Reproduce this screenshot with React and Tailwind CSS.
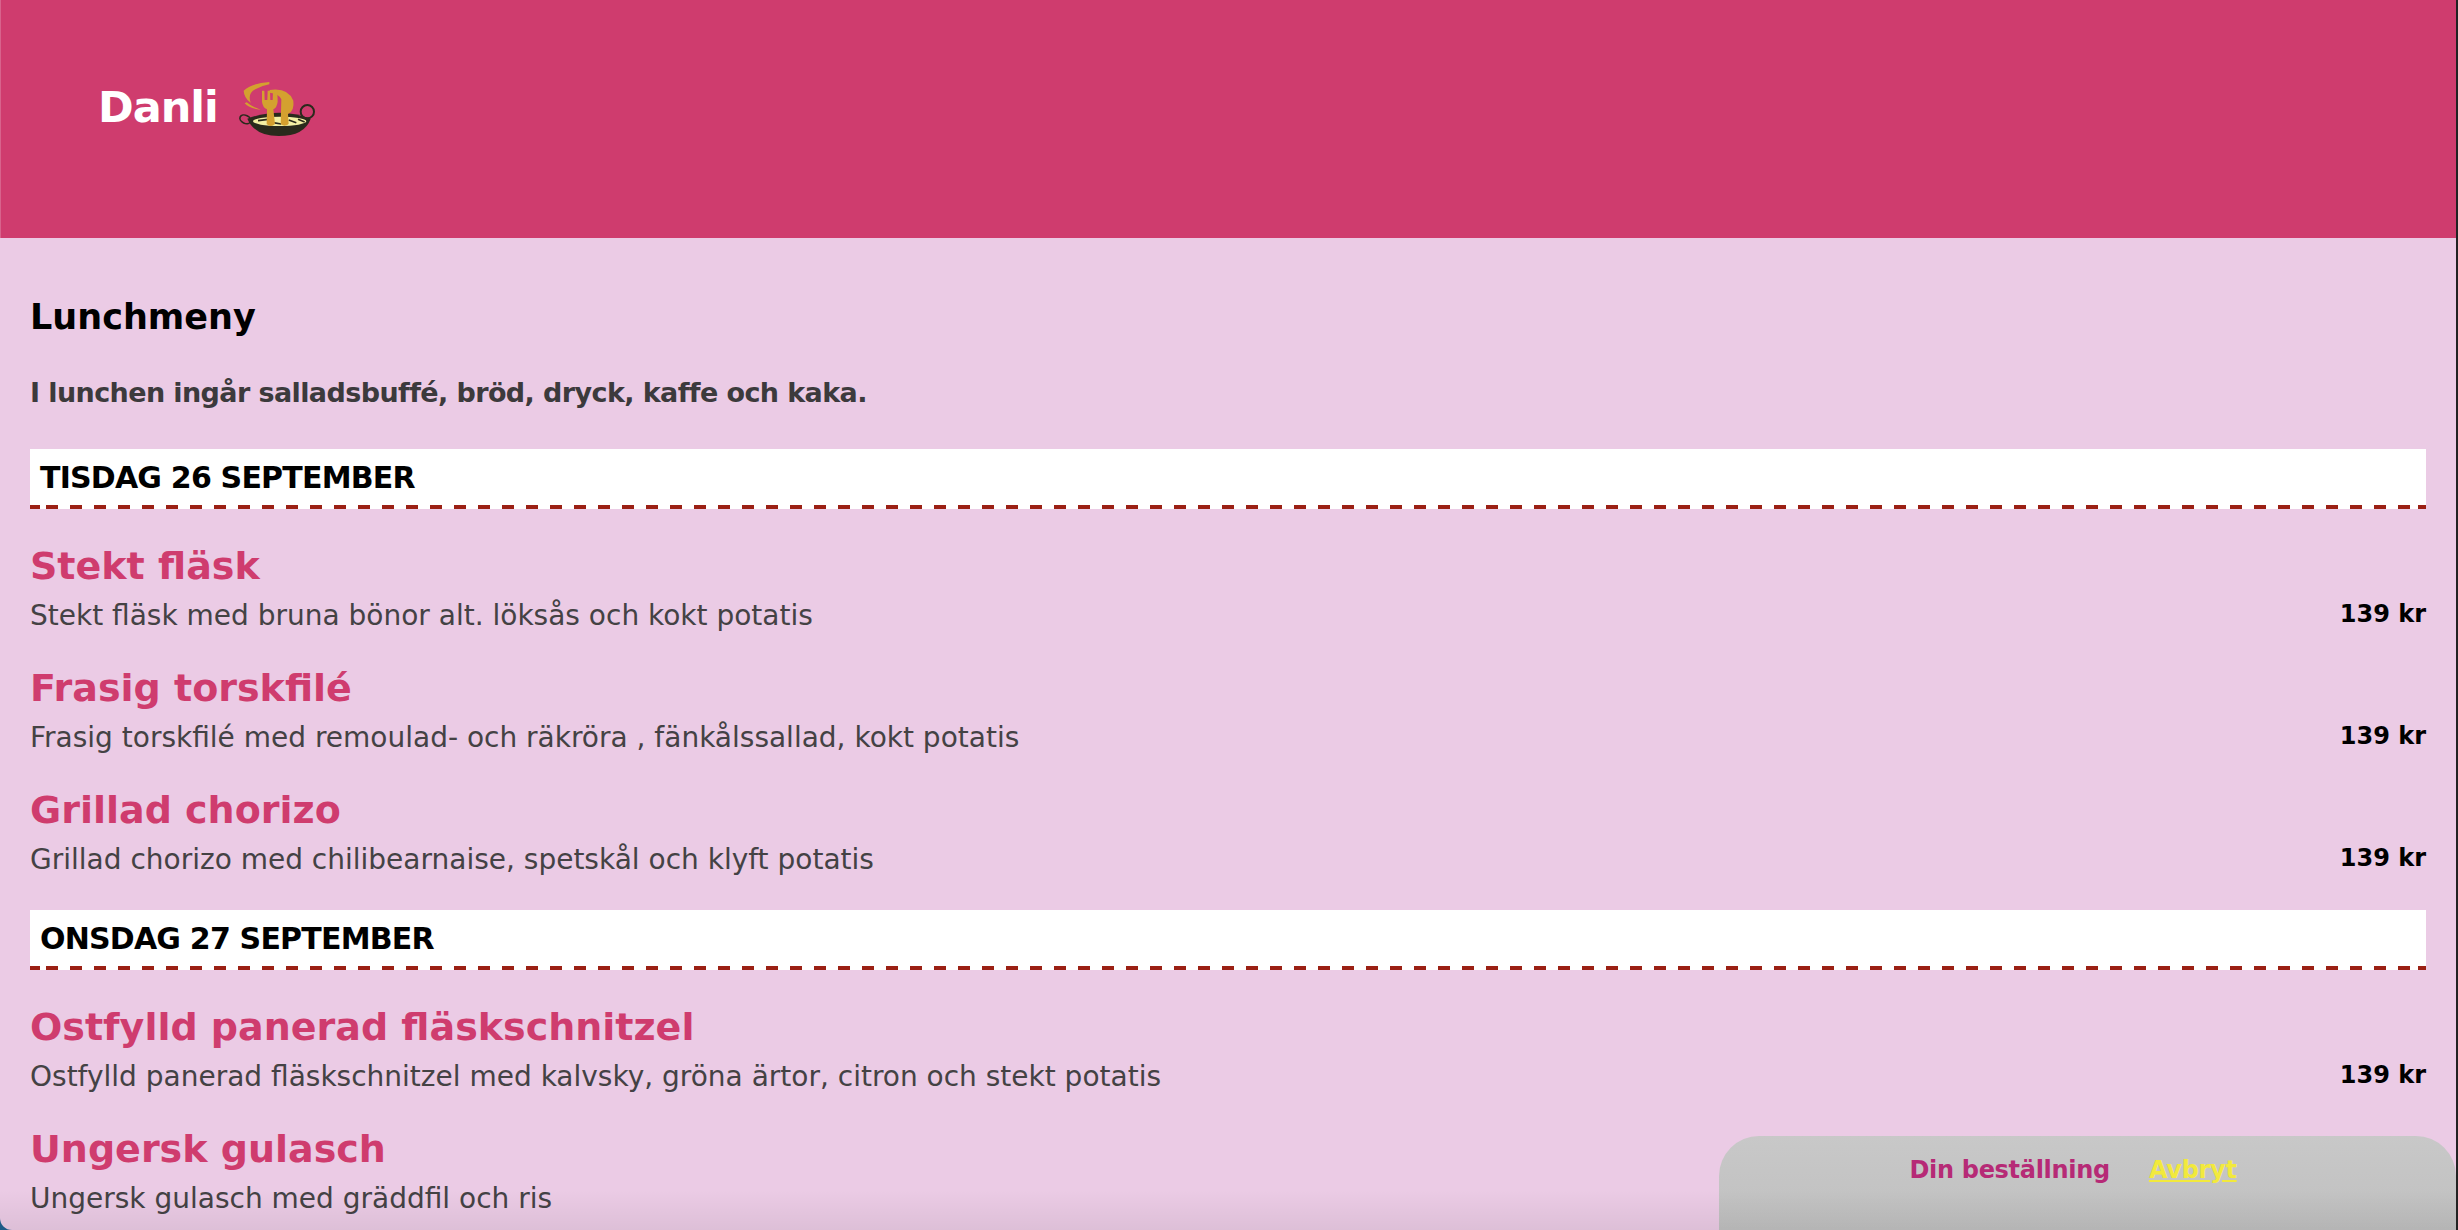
import React from 'react';

const days = [
  {
    label: 'TISDAG 26 SEPTEMBER',
    dishes: [
      { title: 'Stekt fläsk', text: 'Stekt fläsk med bruna bönor alt. löksås och kokt potatis' },
      { title: 'Frasig torskfilé', text: 'Frasig torskfilé med remoulad- och räkröra , fänkålssallad, kokt potatis' },
      { title: 'Grillad chorizo', text: 'Grillad chorizo med chilibearnaise, spetskål och klyft potatis' },
    ],
  },
  {
    label: 'ONSDAG 27 SEPTEMBER',
    dishes: [
      { title: 'Ostfylld panerad fläskschnitzel', text: 'Ostfylld panerad fläskschnitzel med kalvsky, gröna ärtor, citron och stekt potatis' },
      { title: 'Ungersk gulasch', text: 'Ungersk gulasch med gräddfil och ris' },
    ],
  },
];

function Logo() {
  return (
    <svg viewBox="110 60 234 174" className="w-[78px] h-[58px] shrink-0 ml-[20px] mt-[80px]">
      {/* handles */}
      <circle cx="318" cy="155" r="20" fill="none" stroke="#2a2a1c" strokeWidth="6" />
      <ellipse cx="132" cy="178" rx="17" ry="12" fill="none" stroke="#2a2a1c" strokeWidth="5" transform="rotate(25 132 178)" />
      {/* pan */}
      <path d="M138 176 Q235 140 328 176 Q310 228 232 228 Q160 228 138 176 Z" fill="#2a2a1c" />
      <ellipse cx="235" cy="184" rx="80" ry="14" fill="#f4f0a4" />
      <path d="M170 182 L200 178 M262 180 L285 188 M290 178 L310 186 M215 188 L240 192" stroke="#2a2a1c" strokeWidth="5" />
      {/* swirl */}
      <path d="M204 66 Q150 70 127 92 Q128 114 148 128 Q138 100 162 88 Q185 76 204 73 Z" fill="#d4a02f" />
      <path d="M130 130 Q145 146 178 149 Q150 140 136 127 Z" fill="#d4a02f" />
      {/* knife */}
      <path d="M205 90 Q260 82 276 122 Q280 152 260 162 L262 192 Q250 202 238 192 L240 118 Q232 100 205 98 Z" fill="#d4a02f" />
      {/* fork */}
      <path d="M182 92 L189 92 L190 120 L198 120 L199 92 L206 92 L207 120 L214 120 L215 92 L228 92 L229 125 Q227 142 216 148 L221 192 Q208 204 196 192 L197 148 Q184 142 182 125 Z" fill="#d4a02f" />
    </svg>
  );
}

function DashedLine() {
  return (
    <div className="flex h-1">
      <span className="w-[10px] bg-[#9b2014]" />
      <span className="w-[6px]" />
      <div className="flex-1 bg-[repeating-linear-gradient(90deg,#9b2014_0,#9b2014_12px,transparent_12px,transparent_24px)]" />
      <span className="w-[8px] bg-[#9b2014]" />
    </div>
  );
}

export default function App() {
  return (
    <div className="relative h-screen overflow-hidden bg-[#1f5f8f] font-['DejaVu_Sans',sans-serif]">
      <div className="h-full bg-[#ebcbe5] rounded-bl-[12px] overflow-hidden">
        <header className="h-[238px] bg-[#cf3c6e] pl-[97px] flex items-start border-l border-l-[#d8638c]">
          <h1 className="text-[43px] leading-[52px] tracking-[-1px] font-bold text-white mt-[81px]">Danli</h1>
          <Logo />
        </header>

        <main className="pl-[30px] pr-[32px] pt-[56px]">
          <h2 className="text-[35px] leading-[46px] font-bold text-black">Lunchmeny</h2>
          <p className="mt-[35px] pb-[6px] text-[27px] leading-[36px] tracking-[-0.6px] font-bold text-[#3c3a3c]">
            I lunchen ingår salladsbuffé, bröd, dryck, kaffe och kaka.
          </p>

          {days.map((day) => (
            <section key={day.label} className="mt-[32px]">
              <div className="bg-white">
                <div className="h-[56px] pl-[10px] pt-[9px] text-[30px] leading-[40px] tracking-[-0.8px] font-bold text-black">
                  {day.label}
                </div>
                <DashedLine />
              </div>
              <div className="flex flex-col gap-[31px] pt-[34px]">
                {day.dishes.map((dish) => (
                  <div key={dish.title}>
                    <h3 className="text-[38px] leading-[46px] font-bold text-[#cf3c6e]">{dish.title}</h3>
                    <div className="mt-[9px] flex justify-between items-start">
                      <p className="text-[28px] leading-[36px] text-[#444244]">{dish.text}</p>
                      <span className="text-[24px] leading-[32px] font-bold text-black">139 kr</span>
                    </div>
                  </div>
                ))}
              </div>
            </section>
          ))}
        </main>
      </div>

      {/* order panel stuck to the bottom */}
      <div className="absolute right-[2px] bottom-0 w-[737px] h-[94px] rounded-t-[40px] bg-gradient-to-b from-[#c8c8c8] to-[#c0c0c0] flex justify-center gap-[39px] pt-[16px] pr-[29px] text-[24px] leading-[36px] tracking-[-0.3px] font-bold">
        <span className="text-[#b62a76]">Din beställning</span>
        <a href="#" className="text-[#f2e93c] underline">Avbryt</a>
      </div>

      <div className="absolute inset-x-0 bottom-0 h-[40px] bg-gradient-to-b from-transparent to-black/[0.06] pointer-events-none" />
      <div className="absolute right-0 inset-y-0 w-[2px] bg-[#222222]" />
    </div>
  );
}
